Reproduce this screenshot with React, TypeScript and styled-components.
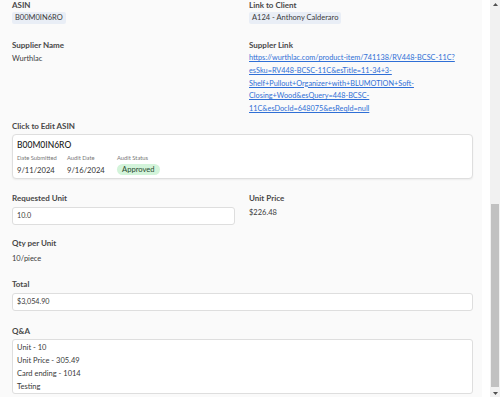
import React from "react";
import styled, { createGlobalStyle } from "styled-components";

const GlobalStyle = createGlobalStyle`
  html, body {
    margin: 0;
    padding: 0;
    background: #ffffff;
  }
  body {
    font-family: Lato, "Noto Sans", sans-serif;
    color: #333;
  }
`;

export const Screen = styled.div`
  display: flex;
  width: 500px;
  height: 397px;
  overflow: hidden;
`;

export const Panel = styled.div`
  width: 482px;
  height: 397px;
  flex-shrink: 0;
  background-color: #fafafa;
  padding: 0 9px 0 12px;
  box-sizing: border-box;
  display: flex;
  flex-direction: column;
`;

export const Gutter = styled.div`
  width: 8px;
  flex-shrink: 0;
  background-color: #ffffff;
`;

// scrollbar
export const ScrollTrack = styled.div`
  width: 10px;
  flex-shrink: 0;
  background-color: #f1f1f1;
  display: flex;
  flex-direction: column;
  align-items: center;
`;

export const ScrollArrow = styled.div<{ $down?: boolean }>`
  height: 8px;
  width: 10px;
  display: flex;
  align-items: center;
  justify-content: center;
  margin-top: ${(p) => (p.$down ? "auto" : "0")};
`;

export const ScrollThumb = styled.div`
  width: 8px;
  height: 183px;
  margin-top: 196px;
  background-color: #c1c1c1;
`;

export const Row = styled.div<{ $mt: number; $full?: boolean }>`
  display: grid;
  grid-template-columns: ${(p) => (p.$full ? "1fr" : "223px 224px")};
  column-gap: 14px;
  margin-top: ${(p) => p.$mt}px;
`;

export const Field = styled.div`
  display: flex;
  flex-direction: column;
  min-width: 0;
`;

export const Label = styled.div`
  font-size: 8px;
  line-height: 10px;
  font-weight: 700;
  color: #484848;
`;

export const Chip = styled.span`
  align-self: flex-start;
  margin-top: 2px;
  height: 12px;
  line-height: 12px;
  padding: 0 3px;
  border-radius: 2px;
  background-color: #e9eef6;
  font-size: 7.5px;
  color: #3a3a3a;
`;

export const Value = styled.div<{ $mt?: number }>`
  margin-top: ${(p) => p.$mt ?? 4}px;
  font-size: 7.5px;
  line-height: 10px;
  color: #3a3a3a;
`;

export const SupplierLink = styled.a`
  margin-top: 2px;
  font-size: 7.3px;
  line-height: 12.8px;
  white-space: nowrap;
  color: #2f6fd6;
  text-decoration: underline;
`;

export const Card = styled.div`
  margin-top: 3px;
  height: 45px;
  box-sizing: border-box;
  background-color: #ffffff;
  border: 1px solid #dedede;
  border-radius: 4px;
  box-shadow: 0 1px 2px rgba(0, 0, 0, 0.06);
  padding: 4px 4px 0 4px;
  display: flex;
  flex-direction: column;
`;

export const CardTitle = styled.div`
  font-size: 8.5px;
  line-height: 12px;
  font-weight: 500;
  color: #222;
`;

export const MetaGrid = styled.div`
  margin-top: 2px;
  display: grid;
  grid-template-columns: 50px 50px auto;
  align-items: center;
`;

export const MetaLabel = styled.div`
  font-size: 5.8px;
  line-height: 9px;
  color: #777;
`;

export const MetaValue = styled.div`
  margin-top: 2px;
  font-size: 7.6px;
  line-height: 12px;
  color: #333;
`;

export const Badge = styled.span`
  justify-self: start;
  margin-top: 2px;
  height: 11px;
  line-height: 11px;
  padding: 0 5px;
  border-radius: 6px;
  background-color: #d3f4da;
  color: #2a4a30;
  font-size: 7.6px;
`;

export const TextInput = styled.input`
  margin-top: 4px;
  height: 18px;
  box-sizing: border-box;
  border: 1px solid #dedede;
  border-radius: 3px;
  background-color: #ffffff;
  padding: 0 4px;
  font-family: inherit;
  font-size: 7.2px;
  color: #3a3a3a;
  outline: none;
`;

export const TextArea = styled.textarea`
  margin-top: 3px;
  height: 55px;
  box-sizing: border-box;
  border: 1px solid #dedede;
  border-radius: 3px;
  background-color: #ffffff;
  padding: 1px 4px 0 4px;
  font-family: inherit;
  font-size: 7.5px;
  line-height: 13px;
  color: #3a3a3a;
  resize: none;
  overflow: hidden;
  outline: none;
`;

const linkLines = [
  "https://wurthlac.com/product-item/741138/RV448-BCSC-11C?",
  "esSku=RV448-BCSC-11C&esTitle=11-34+3-",
  "Shelf+Pullout+Organizer+with+BLUMOTION+Soft-",
  "Closing+Wood&esQuery=448-BCSC-",
  "11C&esDocId=648075&esReqId=null",
];

const Arrow = ({ down }: { down?: boolean }) => (
  <svg width="5" height="3" viewBox="0 0 5 3">
    <path d={down ? "M0 0h5L2.5 3z" : "M0 3h5L2.5 0z"} fill="#505050" />
  </svg>
);

export default function App() {
  return (
    <>
      <GlobalStyle />
      <Screen>
        <Panel>
          <Row $mt={0}>
            <Field>
              <Label>ASIN</Label>
              <Chip>B00M0IN6RO</Chip>
            </Field>
            <Field>
              <Label>Link to Client</Label>
              <Chip>A124 - Anthony Calderaro</Chip>
            </Field>
          </Row>

          <Row $mt={16}>
            <Field>
              <Label>Supplier Name</Label>
              <Value>Wurthlac</Value>
            </Field>
            <Field>
              <Label>Suppler Link</Label>
              <SupplierLink href="#">
                {linkLines.map((line, i) => (
                  <React.Fragment key={i}>
                    {line}
                    {i < linkLines.length - 1 && <br />}
                  </React.Fragment>
                ))}
              </SupplierLink>
            </Field>
          </Row>

          <Row $mt={5} $full>
            <Field>
              <Label>Click to Edit ASIN</Label>
              <Card>
                <CardTitle>B00M0IN6RO</CardTitle>
                <MetaGrid>
                  <MetaLabel>Date Submitted</MetaLabel>
                  <MetaLabel>Audit Date</MetaLabel>
                  <MetaLabel>Audit Status</MetaLabel>
                  <MetaValue>9/11/2024</MetaValue>
                  <MetaValue>9/16/2024</MetaValue>
                  <Badge>Approved</Badge>
                </MetaGrid>
              </Card>
            </Field>
          </Row>

          <Row $mt={14}>
            <Field>
              <Label>Requested Unit</Label>
              <TextInput readOnly value="10.0" />
            </Field>
            <Field>
              <Label>Unit Price</Label>
              <Value $mt={5}>$226.48</Value>
            </Field>
          </Row>

          <Row $mt={13}>
            <Field>
              <Label>Qty per Unit</Label>
              <Value $mt={6}>10/piece</Value>
            </Field>
          </Row>

          <Row $mt={15} $full>
            <Field>
              <Label>Total</Label>
              <TextInput readOnly value="$3,054.90" />
            </Field>
          </Row>

          <Row $mt={15} $full>
            <Field>
              <Label>Q&amp;A</Label>
              <TextArea
                readOnly
                rows={4}
                value={"Unit - 10\nUnit Price - 305.49\nCard ending - 1014\nTesting"}
              />
            </Field>
          </Row>
        </Panel>
        <Gutter />
        <ScrollTrack>
          <ScrollArrow>
            <Arrow />
          </ScrollArrow>
          <ScrollThumb />
          <ScrollArrow $down>
            <Arrow down />
          </ScrollArrow>
        </ScrollTrack>
      </Screen>
    </>
  );
}
